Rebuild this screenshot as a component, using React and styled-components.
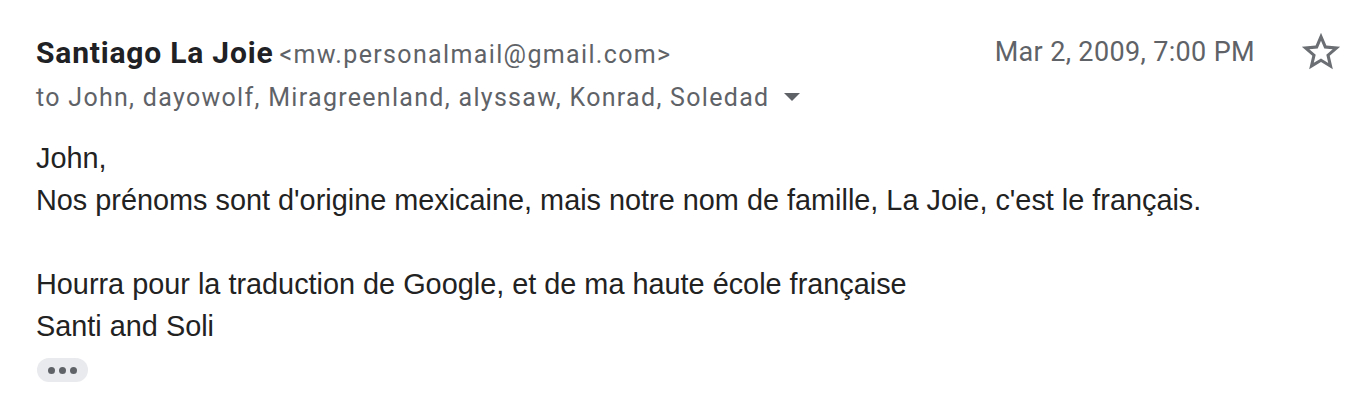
import React from "react";
import styled, { createGlobalStyle } from "styled-components";

const GlobalStyle = createGlobalStyle`
  body {
    margin: 0;
    background: #ffffff;
  }
`;

const Message = styled.div`
  padding: 32px 22px 0 36px;
  font-family: Roboto, "Liberation Sans", Arial, sans-serif;
`;

const HeaderRow = styled.div`
  display: flex;
  align-items: center;
  height: 40px;
`;

const Sender = styled.div`
  flex: 1;
  white-space: nowrap;
`;

const Name = styled.span`
  font-weight: 700;
  font-size: 30px;
  letter-spacing: 0.8px;
  color: #202124;
`;

const Address = styled.span`
  font-size: 25px;
  letter-spacing: 1.35px;
  color: #5f6368;
  margin-left: 6px;
`;

const Date = styled.span`
  font-size: 27px;
  letter-spacing: 0.35px;
  color: #5f6368;
`;

const StarButton = styled.button`
  border: none;
  background: none;
  padding: 0;
  margin-left: 43px;
  width: 46px;
  height: 46px;
  display: flex;
  align-items: center;
  justify-content: center;
  color: #6b6f74;
`;

const Recipients = styled.div`
  display: flex;
  align-items: center;
  margin-top: 9px;
  height: 32px;
  font-size: 25px;
  letter-spacing: 1.3px;
  color: #5f6368;
`;

const Caret = styled.span`
  width: 0;
  height: 0;
  margin-left: 15px;
  border-left: 8px solid transparent;
  border-right: 8px solid transparent;
  border-top: 8px solid #5f6368;
`;

const Body = styled.div`
  margin-top: 24px;
  font-family: "Liberation Sans", Arial, sans-serif;
  font-size: 28.85px;
  line-height: 42px;
  color: #222222;
`;

const Line = styled.div`
  min-height: 42px;
`;

const MoreButton = styled.button`
  margin-top: 11px;
  margin-left: 1px;
  width: 51px;
  height: 24px;
  border: none;
  border-radius: 12px;
  background: #e8eaed;
  display: flex;
  align-items: center;
  justify-content: center;
  gap: 4px;
  padding: 0;
`;

const Dot = styled.span`
  width: 7px;
  height: 7px;
  border-radius: 50%;
  background: #5f6368;
`;

const StarIcon = () => (
  <svg width="46" height="46" viewBox="0 0 24 24" fill="currentColor">
    <path d="M22 9.24l-7.19-.62L12 2 9.19 8.63 2 9.24l5.46 4.73L5.82 21 12 17.27 18.18 21l-1.63-7.03L22 9.24zM12 15.4l-3.76 2.27 1-4.28-3.32-2.88 4.38-.38L12 6.1l1.71 4.04 4.38.38-3.32 2.88 1 4.28L12 15.4z" />
  </svg>
);

const bodyLines = [
  "John,",
  "Nos prénoms sont d'origine mexicaine, mais notre nom de famille, La Joie, c'est le français.",
  "",
  "Hourra pour la traduction de Google, et de ma haute école française",
  "Santi and Soli",
];

export default function App() {
  return (
    <>
      <GlobalStyle />
      <Message>
        <HeaderRow>
          <Sender>
            <Name>Santiago La Joie</Name>
            <Address>&lt;mw.personalmail@gmail.com&gt;</Address>
          </Sender>
          <Date>Mar 2, 2009, 7:00 PM</Date>
          <StarButton aria-label="Star">
            <StarIcon />
          </StarButton>
        </HeaderRow>
        <Recipients>
          to John, dayowolf, Miragreenland, alyssaw, Konrad, Soledad
          <Caret />
        </Recipients>
        <Body>
          {bodyLines.map((text, i) => (
            <Line key={i}>{text}</Line>
          ))}
        </Body>
        <MoreButton aria-label="Show trimmed content">
          <Dot />
          <Dot />
          <Dot />
        </MoreButton>
      </Message>
    </>
  );
}
